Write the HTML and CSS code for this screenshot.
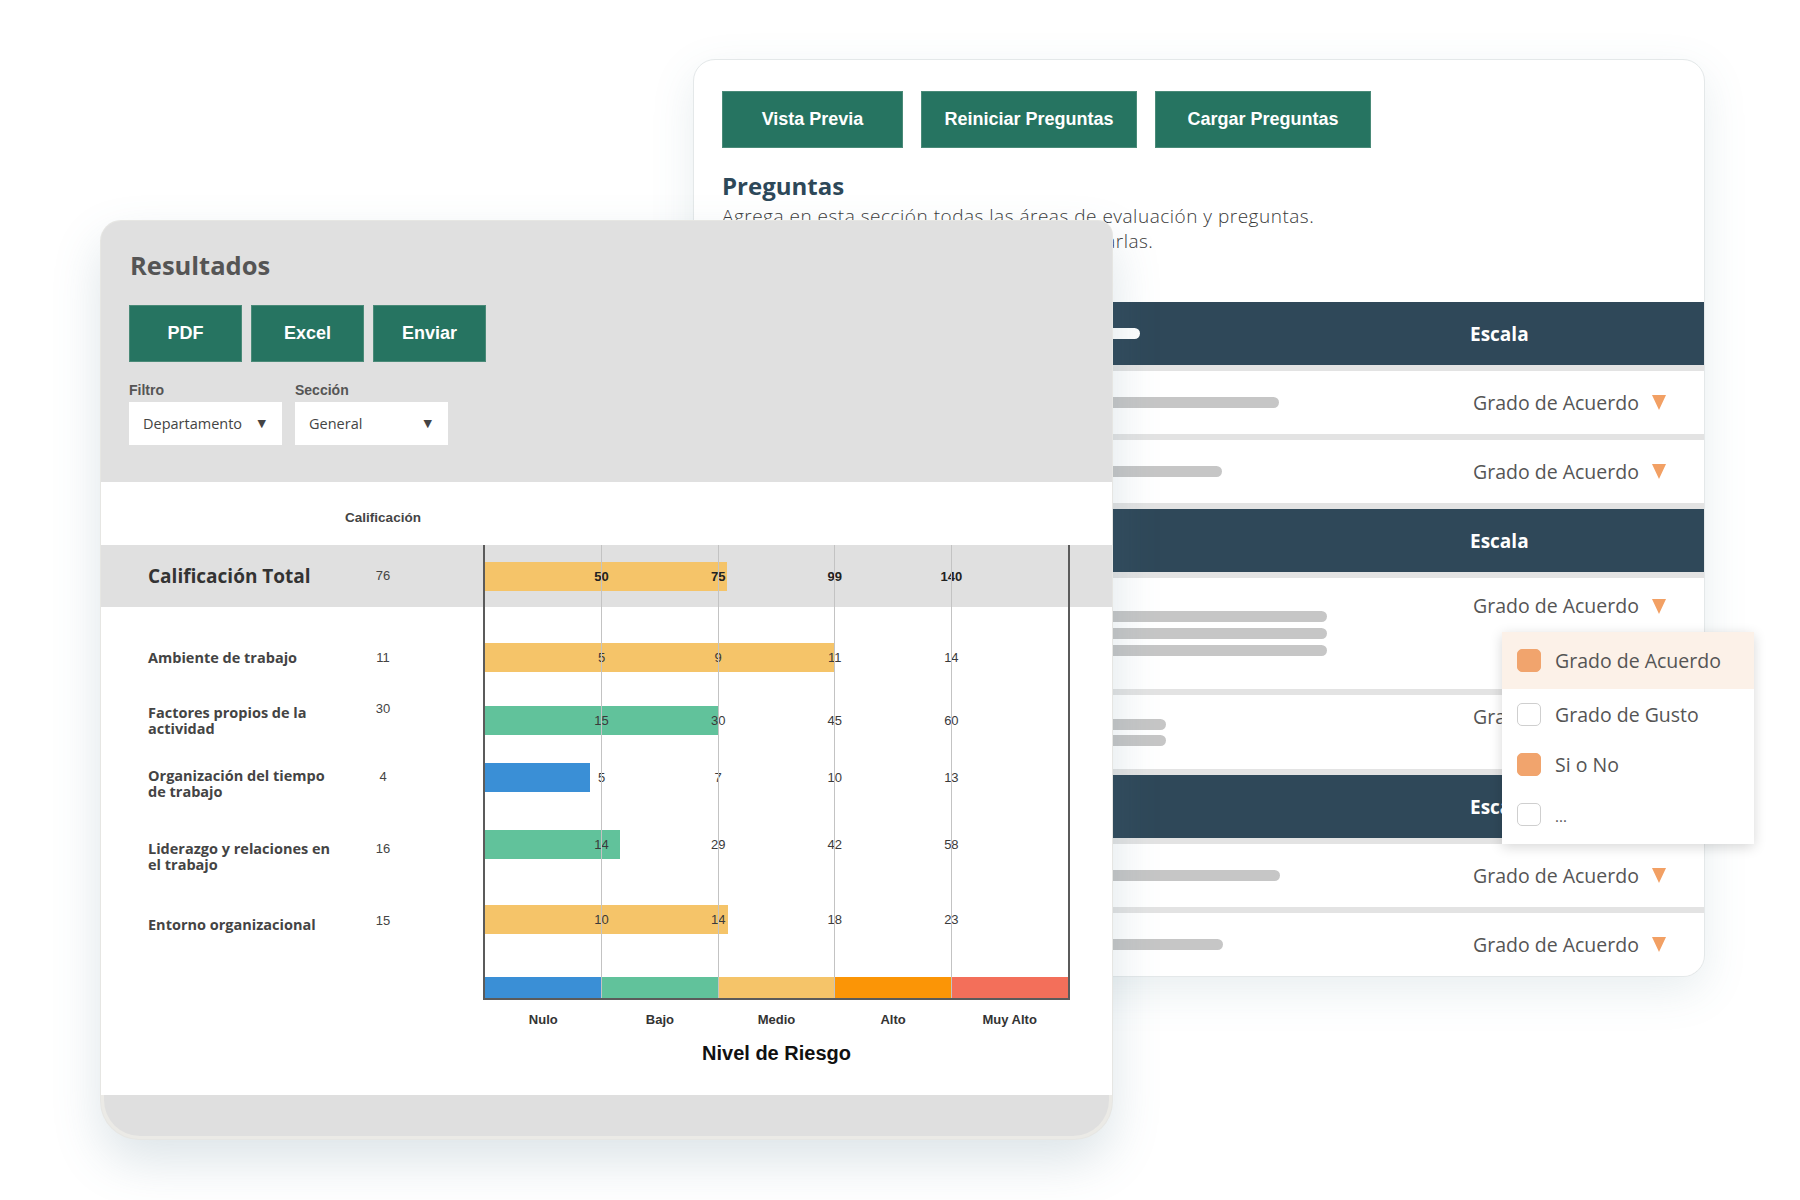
FILE: index.html
```html
<!DOCTYPE html>
<html lang="es">
<head>
<meta charset="utf-8">
<title>Resultados y Preguntas</title>
<link rel="stylesheet" href="styles.css">
</head>
<body>

<section class="window editor">
  <div class="toolbar">
    <button class="btn w-181">Vista Previa</button>
    <button class="btn w-216">Reiniciar Preguntas</button>
    <button class="btn w-216">Cargar Preguntas</button>
  </div>
  <h2 class="ed-title">Preguntas</h2>
  <p class="ed-desc">Agrega en esta sección todas las áreas de evaluación y preguntas.<br>Aquí podrás crear, editar, ordenar o eliminarlas.</p>

  <div class="qtable">
    <div class="thead">
      <span></span>
      <span class="ph ph-white"></span>
      <span class="th">Escala</span>
    </div>
    <div class="trow">
      <span></span>
      <span class="ph" style="width:557px"></span>
      <span class="scale">Grado de Acuerdo <svg class="tri" viewBox="0 0 14 15"><polygon points="0,0 14,0 7,15"/></svg></span>
    </div>
    <div class="trow">
      <span></span>
      <span class="ph" style="width:500px"></span>
      <span class="scale">Grado de Acuerdo <svg class="tri" viewBox="0 0 14 15"><polygon points="0,0 14,0 7,15"/></svg></span>
    </div>
    <div class="thead">
      <span></span>
      <span></span>
      <span class="th">Escala</span>
    </div>
    <div class="trow tall">
      <span></span>
      <span class="ph-stack">
        <span class="ph" style="width:605px"></span>
        <span class="ph" style="width:605px"></span>
        <span class="ph" style="width:605px"></span>
      </span>
      <span class="scale pad15">Grado de Acuerdo <svg class="tri" viewBox="0 0 14 15"><polygon points="0,0 14,0 7,15"/></svg></span>
    </div>
    <div class="trow mid">
      <span></span>
      <span class="ph-stack gap5">
        <span class="ph" style="width:444px"></span>
        <span class="ph" style="width:444px"></span>
      </span>
      <span class="scale pad9">Grado de Acuerdo <svg class="tri" viewBox="0 0 14 15"><polygon points="0,0 14,0 7,15"/></svg></span>
    </div>
    <div class="thead">
      <span></span>
      <span></span>
      <span class="th">Escala</span>
    </div>
    <div class="trow">
      <span></span>
      <span class="ph" style="width:558px"></span>
      <span class="scale">Grado de Acuerdo <svg class="tri" viewBox="0 0 14 15"><polygon points="0,0 14,0 7,15"/></svg></span>
    </div>
    <div class="trow last">
      <span></span>
      <span class="ph" style="width:501px"></span>
      <span class="scale">Grado de Acuerdo <svg class="tri" viewBox="0 0 14 15"><polygon points="0,0 14,0 7,15"/></svg></span>
    </div>
  </div>
</section>

<div class="menu">
  <div class="opt sel"><span class="check on"></span>Grado de Acuerdo</div>
  <div class="opt"><span class="check"></span>Grado de Gusto</div>
  <div class="opt"><span class="check on"></span>Si o No</div>
  <div class="opt"><span class="check"></span><span class="dots">...</span></div>
</div>

<section class="window results">
  <header class="res-head">
    <h1 class="res-title">Resultados</h1>
    <div class="actions">
      <button class="btn act">PDF</button>
      <button class="btn act">Excel</button>
      <button class="btn act">Enviar</button>
    </div>
    <div class="filters">
      <div class="field">
        <label class="flabel">Filtro</label>
        <div class="select"><span>Departamento</span><span class="caret">▼</span></div>
      </div>
      <div class="field">
        <label class="flabel">Sección</label>
        <div class="select"><span>General</span><span class="caret">▼</span></div>
      </div>
    </div>
  </header>

  <div class="scores">
    <div class="band"></div>
    <div class="col-head">Calificación</div>

    <div class="name total y2">Calificación Total</div>
    <div class="score y2">76</div>
    <div class="plot y2">
      <div class="bar yellow" style="width:242px"></div>
      <div class="ticks bold"><span>50</span><span>75</span><span>99</span><span>140</span></div>
    </div>

    <div class="name y4">Ambiente de trabajo</div>
    <div class="score y4">11</div>
    <div class="plot y4">
      <div class="bar yellow" style="width:350px"></div>
      <div class="ticks"><span>5</span><span>9</span><span>11</span><span>14</span></div>
    </div>

    <div class="name y5">Factores propios de la<br>actividad</div>
    <div class="score y5 top13">30</div>
    <div class="plot y5">
      <div class="bar green" style="width:233px"></div>
      <div class="ticks"><span>15</span><span>30</span><span>45</span><span>60</span></div>
    </div>

    <div class="name y6 top15">Organización del tiempo<br>de trabajo</div>
    <div class="score y6">4</div>
    <div class="plot y6">
      <div class="bar blue" style="width:105px"></div>
      <div class="ticks"><span>5</span><span>7</span><span>10</span><span>13</span></div>
    </div>

    <div class="name y7 top40">Liderazgo y relaciones en<br>el trabajo</div>
    <div class="score y7 top40">16</div>
    <div class="plot y7">
      <div class="bar green" style="width:135px"></div>
      <div class="ticks"><span>14</span><span>29</span><span>42</span><span>58</span></div>
    </div>

    <div class="name y8 top29">Entorno organizacional</div>
    <div class="score y8 top25">15</div>
    <div class="plot y8">
      <div class="bar yellow" style="width:243px"></div>
      <div class="ticks"><span>10</span><span>14</span><span>18</span><span>23</span></div>
    </div>

    <div class="levels">
      <span class="lv-nulo"></span><span class="lv-bajo"></span><span class="lv-medio"></span><span class="lv-alto"></span><span class="lv-muy"></span>
    </div>

    <div class="frame"><span></span><span></span><span></span><span></span><span></span></div>

    <div class="level-names"><span>Nulo</span><span>Bajo</span><span>Medio</span><span>Alto</span><span>Muy Alto</span></div>
    <div class="axis-title">Nivel de Riesgo</div>
  </div>
  <div class="res-foot"></div>
</section>

</body>
</html>
```

FILE: styles.css
```css
* { box-sizing: border-box; }
html, body { margin: 0; padding: 0; }
body {
  width: 1800px;
  height: 1200px;
  position: relative;
  overflow: hidden;
  background: #ffffff;
  font-family: "Open Sans", "Liberation Sans", sans-serif;
  color: #444;
}

.window { position: absolute; background: #fff; }

/* ---------- generic buttons ---------- */
.btn {
  display: flex;
  align-items: center;
  justify-content: center;
  height: 57px;
  padding: 0;
  background: #267461;
  color: #fff;
  border: 1px solid #4a8a78;
  font: bold 18px "Liberation Sans", Arial, sans-serif;
  cursor: pointer;
}

/* ---------- back window: editor ---------- */
.editor {
  left: 693px;
  top: 59px;
  width: 1012px;
  height: 918px;
  border: 1px solid #e4e8e9;
  border-radius: 22px;
  overflow: hidden;
  display: flex;
  flex-direction: column;
  box-shadow: 0 14px 44px rgba(80, 120, 140, 0.13);
}
.toolbar {
  display: flex;
  gap: 18px;
  padding: 31px 0 0 28px;
}
.w-181 { width: 181px; }
.w-216 { width: 216px; }

.ed-title {
  margin: 23px 0 0 28px;
  font: 700 24px/30px "Open Sans", sans-serif;
  color: #2d4859;
}
.ed-desc {
  margin: 3px 0 0 28px;
  font: 300 19px/25px "Open Sans", sans-serif;
  letter-spacing: 0.5px;
  color: #3a3a3a;
}

.qtable {
  margin-top: 48px;
  flex: 1;
  display: flex;
  flex-direction: column;
  gap: 6px;
  background: #e3e3e3;
}
.thead, .trow {
  display: grid;
  grid-template-columns: 28px 748px 1fr;
  align-items: center;
  height: 63px;
  flex: none;
}
.thead { background: #2f4859; }
.trow { background: #fff; }
.trow.tall { height: 111px; }
.trow.mid { height: 74px; }
.trow.last { flex: 1; }

.th {
  font: 700 19px "Open Sans", sans-serif;
  color: #fff;
}
.ph {
  display: block;
  height: 11px;
  border-radius: 6px;
  background: #c6c6c6;
}
.ph-white { width: 418px; background: #fff; }
.ph-stack { display: flex; flex-direction: column; gap: 6px; }
.ph-stack.gap5 { gap: 5px; }

.scale {
  display: flex;
  align-items: center;
  padding-left: 3px;
  font: 400 19.5px/26px "Open Sans", sans-serif;
  color: #555;
  white-space: nowrap;
}
.scale.pad15 { align-self: start; padding-top: 15px; }
.scale.pad9 { align-self: start; padding-top: 9px; }
.tri {
  width: 14px;
  height: 15px;
  margin-left: 13px;
  fill: #f2a064;
}

/* ---------- dropdown menu ---------- */
.menu {
  position: absolute;
  left: 1502px;
  top: 632px;
  width: 252px;
  height: 212px;
  background: #fff;
  box-shadow: 0 3px 12px rgba(0, 0, 0, 0.16);
  padding-bottom: 6px;
  z-index: 3;
}
.opt {
  display: flex;
  align-items: center;
  gap: 14px;
  height: 50px;
  padding-left: 15px;
  font: 400 19.5px "Open Sans", sans-serif;
  color: #555;
}
.opt.sel { height: 57px; background: #fcf1e8; }
.check {
  width: 24px;
  height: 23px;
  border-radius: 5px;
  border: 1.5px solid #cfcfcf;
  background: #fff;
  flex: none;
}
.check.on { background: #f1a46d; border-color: #f1a46d; }
.dots { font-size: 15px; padding-top: 4px; }

/* ---------- front window: results ---------- */
.results {
  left: 101px;
  top: 221px;
  width: 1011px;
  height: 918px;
  border-radius: 20px 14px 38px 38px;
  overflow: hidden;
  display: flex;
  flex-direction: column;
  background: #ebeae6;
  box-shadow: 0 0 0 1px #e6e6e3, 0 22px 50px rgba(80, 120, 140, 0.2);
  z-index: 2;
}
.res-head {
  background: #e0e0e0;
  padding: 28px 28px 37px 28px;
}
.res-title {
  margin: 0 0 0 1px;
  font: 700 25.5px/32px "Open Sans", sans-serif;
  color: #555;
}
.actions {
  display: flex;
  gap: 9px;
  margin-top: 24px;
}
.act { width: 113px; }

.filters {
  display: flex;
  gap: 13px;
  margin-top: 20px;
}
.field { display: flex; flex-direction: column; }
.flabel {
  font: bold 14px/17px "Liberation Sans", Arial, sans-serif;
  color: #555;
  margin-bottom: 3px;
}
.select {
  width: 153px;
  height: 43px;
  background: #fff;
  display: flex;
  align-items: center;
  justify-content: space-between;
  padding: 0 16px 0 14px;
  font: 500 14.5px "Open Sans", sans-serif;
  color: #444;
}
.caret { font: 11px "DejaVu Sans", sans-serif; color: #444; }

/* score grid */
.scores {
  display: grid;
  grid-template-columns: 47px 192px 86px 57px 587px 1fr;
  grid-template-rows: 63px 62px 20px 61px 65px 48px 87px 63px 26px 23px 38px 30px 27px;
  background: #fff;
}
.band { grid-row: 2; grid-column: 1 / -1; background: #e0e0e0; }
.col-head {
  grid-row: 1;
  grid-column: 3;
  align-self: end;
  justify-self: center;
  margin-bottom: 19px;
  font: bold 13.5px/16px "Liberation Sans", Arial, sans-serif;
  color: #444;
}
.name {
  grid-column: 2;
  align-self: center;
  font: 700 14.5px/16px "Open Sans", sans-serif;
  color: #444;
  white-space: nowrap;
}
.name.total { font-size: 19px; line-height: 24px; color: #333; }
.score {
  grid-column: 3;
  justify-self: center;
  align-self: center;
  font: 13px/16px "Liberation Sans", Arial, sans-serif;
  color: #444;
}
.top13 { align-self: start; margin-top: 13px; }
.top15 { align-self: start; margin-top: 15px; }
.top25 { align-self: start; margin-top: 25px; }
.top29 { align-self: start; margin-top: 29px; }
.top40 { align-self: start; margin-top: 40px; }

.y2 { grid-row: 2; }
.y4 { grid-row: 4; }
.y5 { grid-row: 5; }
.y6 { grid-row: 6; }
.y7 { grid-row: 7; }
.y8 { grid-row: 8; }

.plot {
  grid-column: 5;
  display: grid;
  align-items: center;
}
.plot > * { grid-area: 1 / 1; }
.bar { height: 29px; margin-left: 2px; }
.yellow { background: #f5c469; }
.green { background: #61c29b; }
.blue { background: #3a8fd6; }
.ticks {
  display: grid;
  grid-template-columns: repeat(4, 116.6px);
  padding-left: 60.3px;
  text-align: center;
  font: 13px "Liberation Sans", Arial, sans-serif;
  color: #3a3a3a;
}
.ticks.bold { font-weight: bold; color: #222; }

.levels {
  grid-row: 10;
  grid-column: 5;
  display: flex;
  height: 21px;
  margin: 0 2px;
}
.levels span { flex: 1; }
.lv-nulo { background: #3a8fd6; }
.lv-bajo { background: #61c29b; }
.lv-medio { background: #f5c469; }
.lv-alto { background: #fb9506; }
.lv-muy { background: #f36f5a; }

.frame {
  grid-row: 2 / 11;
  grid-column: 5;
  display: flex;
  border: 2px solid #5b5b5b;
  border-top: 0;
}
.frame span { flex: 1; border-right: 1px solid #c3c3c3; }
.frame span:last-child { border-right: 0; }

.level-names {
  grid-row: 11;
  grid-column: 5;
  display: flex;
  align-items: center;
  padding: 0 2px;
  font: bold 13px "Liberation Sans", Arial, sans-serif;
  color: #333;
}
.level-names span { flex: 1; text-align: center; }
.axis-title {
  grid-row: 12;
  grid-column: 5;
  text-align: center;
  font: bold 20px/30px "Liberation Sans", Arial, sans-serif;
  color: #111;
}
.res-foot {
  flex: 1;
  margin: 0 3px 3px;
  border-radius: 0 0 36px 36px;
  background: #dfdfdf;
}
```
